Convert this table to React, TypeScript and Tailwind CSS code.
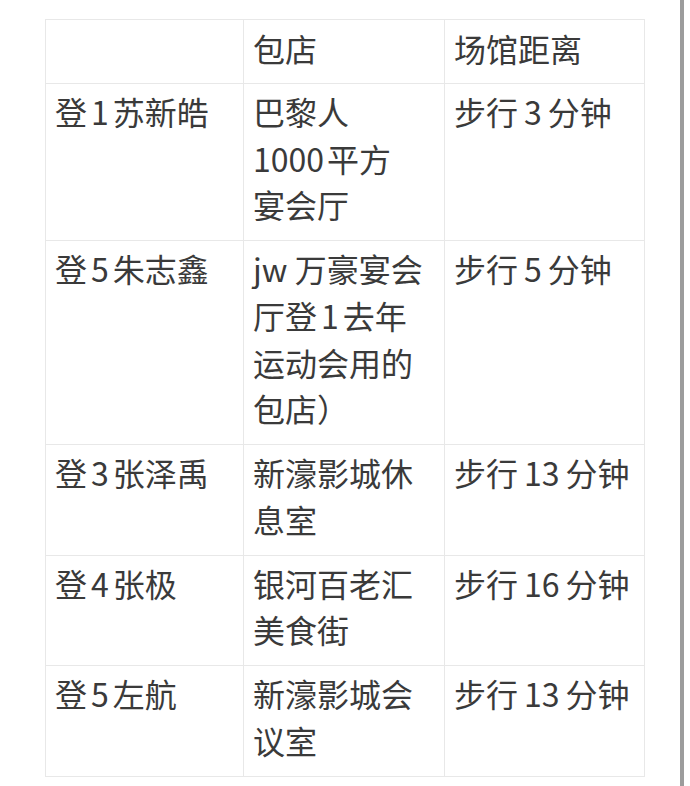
const rows: string[][][] = [
  [["登1苏新皓"], ["巴黎人", "1000平方", "宴会厅"], ["步行3分钟"]],
  [["登5朱志鑫"], ["jw 万豪宴会", "厅登1去年", "运动会用的", "包店）"], ["步行5分钟"]],
  [["登3张泽禹"], ["新濠影城休", "息室"], ["步行13分钟"]],
  [["登4张极"], ["银河百老汇", "美食街"], ["步行16分钟"]],
  [["登5左航"], ["新濠影城会", "议室"], ["步行13分钟"]],
]

// digits squeezed between CJK chars get a little air, as in the screenshot
const Line = ({ text, wide }: { text: string; wide: boolean }) => {
  const parts = text.split(/(\d+)/)
  return (
    <div className="whitespace-nowrap">
      {parts.map((p, i) => {
        if (!/^\d+$/.test(p)) return <span key={i}>{p}</span>
        const cls = i === 1 && parts[0] === "" ? "mr-[3px]" : wide ? "mx-[6px]" : "mx-[4px]"
        return <span key={i} className={cls}>{p}</span>
      })}
    </div>
  )
}

const Cell = ({ lines, wide }: { lines: string[]; wide: boolean }) => (
  <td className="border border-[#e8e8e8] pl-[9px] pr-[10px] pt-[4px] pb-[12px] align-top">
    {lines.map((l, i) => <Line key={i} text={l} wide={wide} />)}
  </td>
)

export default function App() {
  return (
    <div
      className="flex h-[786px] w-[690px] bg-white text-[32px] leading-[46.75px] text-[#3a3a3a]"
      style={{ fontFamily: '"Noto Sans CJK SC", "Noto Sans", sans-serif' }}
    >
      <div className="pl-[45px] pt-[19px]">
        <table className="table-fixed border-collapse w-[599px]">
          <colgroup>
            <col className="w-[198px]" />
            <col className="w-[201px]" />
            <col className="w-[200px]" />
          </colgroup>
          <thead>
            <tr>
              <td className="border border-[#e8e8e8] pl-[9px] pr-[10px] pt-[5px] pb-[11px]"></td>
              <td className="border border-[#e8e8e8] pl-[9px] pr-[10px] pt-[5px] pb-[11px] font-normal">包店</td>
              <td className="border border-[#e8e8e8] pl-[9px] pr-[10px] pt-[5px] pb-[11px] font-normal">场馆距离</td>
            </tr>
          </thead>
          <tbody>
            {rows.map((r, i) => (
              <tr key={i}>
                {r.map((c, j) => <Cell key={j} lines={c} wide={j === 2} />)}
              </tr>
            ))}
          </tbody>
        </table>
      </div>
      <div className="flex-1" />
      <div className="w-[4px] bg-[#9c9c9c]" />
      <div className="w-[6px]" />
    </div>
  )
}
